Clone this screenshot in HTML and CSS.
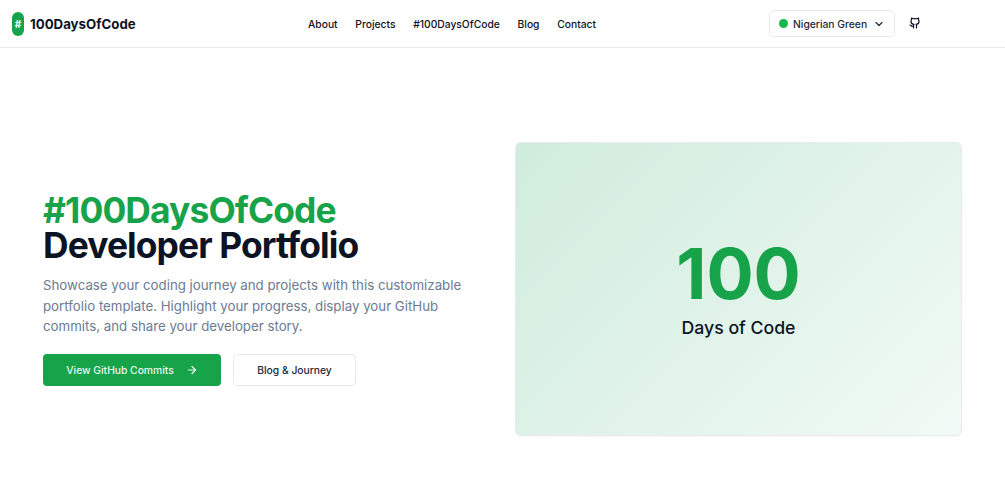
FILE: index.html
```html
<!DOCTYPE html>
<html lang="en">
<head>
  <meta charset="UTF-8" />
  <meta name="viewport" content="width=device-width, initial-scale=1.0" />
  <title>100DaysOfCode</title>
  <link rel="stylesheet" href="styles.css">
</head>
<body>

  <header class="navbar">
    <a class="brand" href="#">
      <span class="brand-badge">#</span>
      <span class="brand-name">100DaysOfCode</span>
    </a>
    <nav class="nav-links">
      <a href="#">About</a>
      <a href="#">Projects</a>
      <a href="#">#100DaysOfCode</a>
      <a href="#">Blog</a>
      <a href="#">Contact</a>
    </nav>
    <div class="nav-actions">
      <button class="theme-select">
        <span class="theme-dot"></span>
        <span class="theme-name">Nigerian Green</span>
        <svg class="chevron" viewBox="0 0 24 24" width="12" height="12"><path d="m6 9 6 6 6-6"/></svg>
      </button>
      <a class="github-link" href="#">
        <svg viewBox="0 0 24 24" width="12" height="12"><path d="M15 22v-4a4.8 4.8 0 0 0-1-3.5c3 0 6-2 6-5.5.08-1.25-.27-2.48-1-3.5.28-1.15.28-2.35 0-3.5 0 0-1 0-3 1.5-2.64-.5-5.36-.5-8 0C6 2 5 2 5 2c-.3 1.15-.3 2.35 0 3.5A5.403 5.403 0 0 0 4 9c0 3.5 3 5.5 6 5.5-.39.49-.68 1.05-.85 1.65-.17.6-.22 1.23-.15 1.85v4"/><path d="M9 18c-4.51 2-5-2-7-2"/></svg>
      </a>
    </div>
  </header>

  <main class="hero">
    <section class="hero-text">
      <h1><span class="accent">#100DaysOfCode</span><br>Developer Portfolio</h1>
      <p>Showcase your coding journey and projects with this customizable portfolio template. Highlight your progress, display your GitHub commits, and share your developer story.</p>
      <div class="hero-buttons">
        <a class="btn btn-primary" href="#">
          View GitHub Commits
          <svg viewBox="0 0 24 24" width="12" height="12"><path d="M5 12h14"/><path d="m12 5 7 7-7 7"/></svg>
        </a>
        <a class="btn btn-outline" href="#">Blog &amp; Journey</a>
      </div>
    </section>
    <section class="hero-card">
      <div class="card-number">100</div>
      <div class="card-label">Days of Code</div>
    </section>
  </main>

</body>
</html>
```

FILE: styles.css
```css
* {
  box-sizing: border-box;
}
body {
  margin: 0;
  font-family: Inter, sans-serif;
  color: #0b1324;
  background: #fff;
}
a {
  color: inherit;
  text-decoration: none;
}
svg {
  fill: none;
  stroke: currentColor;
  stroke-width: 2.4;
  stroke-linecap: round;
  stroke-linejoin: round;
}
.navbar {
  display: flex;
  align-items: center;
  height: 48px;
  padding: 0 12px;
  border-bottom: 1px solid #e7eaef;
}
.brand {
  display: flex;
  align-items: center;
  gap: 6px;
  width: 296px;
}
.brand-badge {
  display: flex;
  align-items: center;
  justify-content: center;
  width: 12px;
  height: 24px;
  border-radius: 6px;
  background: #16a34a;
  color: #fff;
  font-size: 10px;
  font-weight: 700;
}
.brand-name {
  font-size: 13.25px;
  font-weight: 700;
}
.nav-links {
  display: flex;
  gap: 17.7px;
  width: 461px;
  font-size: 10.3px;
  font-weight: 500;
}
.nav-actions {
  display: flex;
  align-items: center;
  gap: 14px;
}
.theme-select {
  display: flex;
  align-items: center;
  height: 27px;
  width: 126px;
  padding: 0 9px;
  border: 1px solid #e7eaef;
  border-radius: 5px;
  background: #fff;
  color: #1e293b;
  font-family: inherit;
  font-size: 10.3px;
  font-weight: 500;
}
.theme-dot {
  flex: none;
  width: 9px;
  height: 9px;
  margin-right: 5px;
  border-radius: 50%;
  background: #16b84e;
}
.theme-name {
  white-space: nowrap;
}
.chevron {
  flex: none;
  margin-left: 6px;
}
.github-link {
  display: flex;
  margin-top: -2px;
}
.hero {
  display: grid;
  grid-template-columns: 1fr 447px;
  gap: 44px;
  padding: 94px 43px;
  align-items: center;
}
.hero-text {
  padding-top: 1px;
}
.hero-text h1 {
  margin: 0;
  font-size: 35.4px;
  line-height: 35px;
  font-weight: 700;
  letter-spacing: -0.9px;
}
.accent {
  color: #16a34a;
}
.hero-text p {
  max-width: 425px;
  margin: 12px 0 0;
  font-size: 13.27px;
  line-height: 20.5px;
  color: #6b7b92;
}
.hero-buttons {
  display: flex;
  gap: 12px;
  margin-top: 17px;
}
.btn {
  display: flex;
  align-items: center;
  justify-content: center;
  height: 32px;
  border-radius: 4px;
  font-size: 10.3px;
  font-weight: 500;
}
.btn-primary {
  gap: 12px;
  width: 178px;
  background: #16a34a;
  color: #e9f7ee;
}
.btn-outline {
  width: 123px;
  border: 1px solid #e7eaef;
  color: #1e293b;
}
.hero-card {
  display: flex;
  flex-direction: column;
  align-items: center;
  justify-content: center;
  height: 294px;
  border: 1px solid #e7eaef;
  border-radius: 6px;
  background: linear-gradient(135deg, #d0ecdc, #f1faf6);
  box-shadow: 0 1px 2px rgba(0, 0, 0, 0.04);
}
.card-number {
  margin-top: 1px;
  font-size: 70px;
  line-height: 72px;
  font-weight: 700;
  color: #16a34a;
}
.card-label {
  margin-top: 4px;
  font-size: 17.7px;
  line-height: 28px;
  font-weight: 500;
}
```
